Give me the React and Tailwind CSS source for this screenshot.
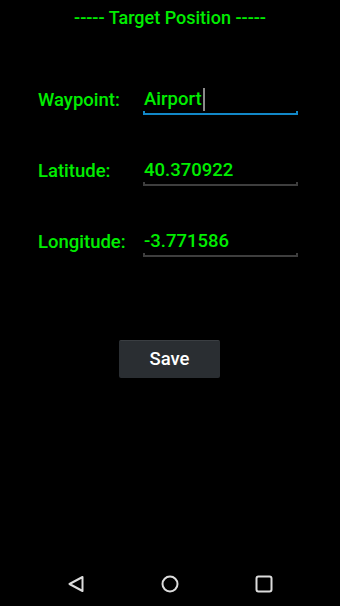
import React from 'react';

const green = 'text-[#00ee00]';

const Field = ({ label, value, active }) => {
    return (
        <div className='flex items-end h-[40px]'>
            <div className={`w-[105px] pl-[38px] box-content text-[18.5px] font-medium leading-none pb-[6px] ${green}`}>{label}</div>
            <div className='w-[155px] flex flex-col'>
                <div className={`flex items-center text-[18.5px] font-medium leading-none pl-[1px] pt-[4px] h-[28px] ${green}`}>
                    <span>{value}</span>
                    {active && <span className='w-[2px] h-[23px] bg-[#8a8a8a] ml-[1px]'></span>}
                </div>
                <div className={`h-[4px] border-x-2 border-b-2 ${active ? 'border-[#1288c8]' : 'border-[#3e3e3e]'}`}></div>
            </div>
        </div>
    );
};

const App = () => {
    return (
        <div className='w-[340px] h-[606px] bg-black flex flex-col font-["Roboto",sans-serif] overflow-hidden'>
            {/* Header */}
            <div className={`text-center text-[18px] font-medium leading-none pt-[9px] ${green}`}>----- Target Position -----</div>

            {/* Fields */}
            <div className='flex flex-col gap-[31px] mt-[48px]'>
                <Field label='Waypoint:' value='Airport' active />
                <Field label='Latitude:' value='40.370922' />
                <Field label='Longitude:' value='-3.771586' />
            </div>

            {/* Save */}
            <div className='flex justify-center mt-[83px]'>
                <button className='w-[101px] h-[38px] ml-[-1px] bg-[#2a2e32] border-t border-[#3a3e42] text-white text-[18.5px] font-medium rounded-[2px]'>Save</button>
            </div>

            <div className='flex-1'></div>

            {/* Nav bar */}
            <div className='h-[48px] flex items-center justify-center gap-[76px] pt-[4px]'>
                <svg width='18' height='18' viewBox='0 0 18 18'>
                    <path d='M15.5 2 L2.5 9 L15.5 16 Z' fill='none' stroke='#dcdcdc' strokeWidth='2' strokeLinejoin='round' />
                </svg>
                <svg width='18' height='18' viewBox='0 0 18 18'>
                    <circle cx='9' cy='9' r='7.5' fill='none' stroke='#dcdcdc' strokeWidth='2' />
                </svg>
                <svg width='18' height='18' viewBox='0 0 18 18'>
                    <rect x='1.5' y='1.5' width='15' height='15' rx='2' fill='none' stroke='#dcdcdc' strokeWidth='2' />
                </svg>
            </div>
        </div>
    );
};

export default App;
